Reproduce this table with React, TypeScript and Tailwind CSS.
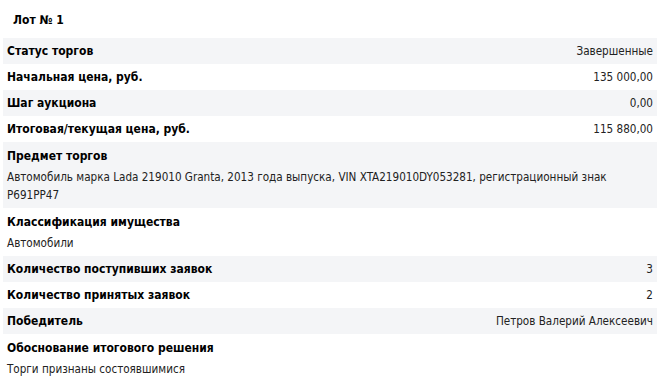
const rows: (
  | { kind: "pair"; label: string; value: string }
  | { kind: "block"; label: string; text: string }
)[] = [
  { kind: "pair", label: "Статус торгов", value: "Завершенные" },
  { kind: "pair", label: "Начальная цена, руб.", value: "135 000,00" },
  { kind: "pair", label: "Шаг аукциона", value: "0,00" },
  { kind: "pair", label: "Итоговая/текущая цена, руб.", value: "115 880,00" },
  {
    kind: "block",
    label: "Предмет торгов",
    text: "Автомобиль марка Lada 219010 Granta, 2013 года выпуска, VIN XTA219010DY053281, регистрационный знак Р691РР47",
  },
  { kind: "block", label: "Классификация имущества", text: "Автомобили" },
  { kind: "pair", label: "Количество поступивших заявок", value: "3" },
  { kind: "pair", label: "Количество принятых заявок", value: "2" },
  { kind: "pair", label: "Победитель", value: "Петров Валерий Алексеевич" },
  { kind: "block", label: "Обоснование итогового решения", text: "Торги признаны состоявшимися" },
];

export default function App() {
  return (
    <div
      className="h-[376px] w-[665px] overflow-hidden bg-white text-[11.6px] text-[#222]"
      style={{ fontFamily: "'DejaVu Sans Condensed', 'Liberation Sans', sans-serif" }}
    >
      <h2 className="px-[13px] pt-[10px] pb-[8px] text-[12px] font-bold leading-[20px] text-black">Лот № 1</h2>
      <div className="w-[654px] pl-[3px] box-content">
        {rows.map((r, i) =>
          r.kind === "pair" ? (
            <div
              key={r.label}
              className={`flex items-center justify-between px-[4px] leading-[26px] ${i % 2 === 0 ? "bg-[#f4f5f7]" : "bg-white"}`}
            >
              <span className="text-[12px] font-bold text-black">{r.label}</span>
              <span>{r.value}</span>
            </div>
          ) : (
            <div key={r.label} className={`px-[4px] py-[4px] ${i % 2 === 0 ? "bg-[#f4f5f7]" : "bg-white"}`}>
              <div className="text-[12px] font-bold leading-[20px] text-black">{r.label}</div>
              <div className="mt-[2px] leading-[18px]">{r.text}</div>
            </div>
          ),
        )}
      </div>
    </div>
  );
}
